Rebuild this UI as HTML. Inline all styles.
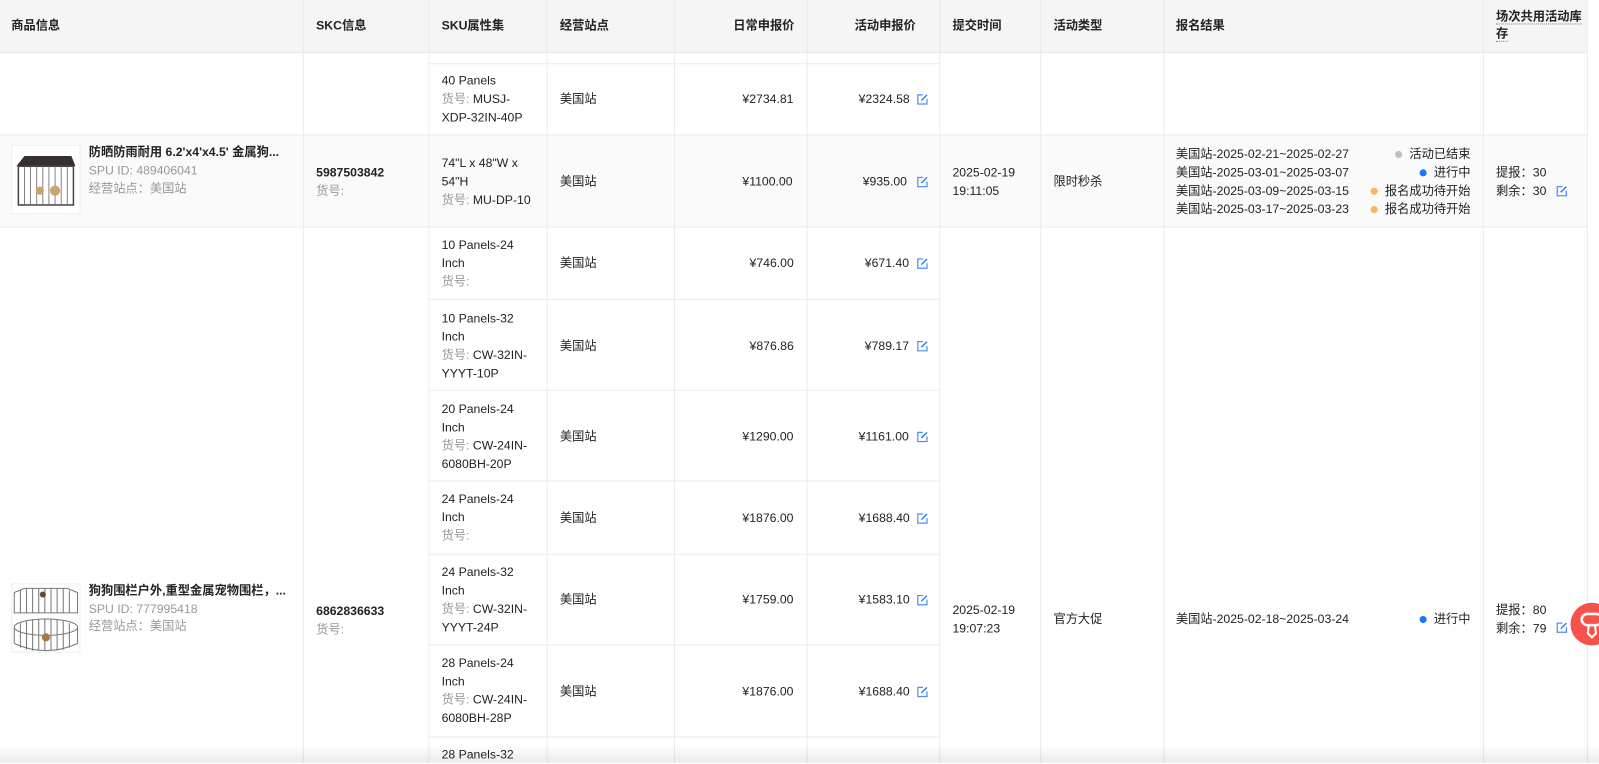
<!DOCTYPE html>
<html><head><meta charset="utf-8">
<style>
*{margin:0;padding:0;box-sizing:border-box}
html,body{width:1599px;height:762px;overflow:hidden;background:#fff}
#w{position:absolute;left:0;top:0;width:1568px;height:748px;transform:scale(1.0198);transform-origin:0 0;font-family:"Liberation Sans","Noto Sans CJK SC",sans-serif;font-size:12px;color:#222;line-height:18px}
.a{position:absolute;white-space:nowrap}
.v{position:absolute;background:#ebebeb;width:1px}
.h{position:absolute;background:#ebebeb;height:1px}
.g{color:#999}
.b{font-weight:bold}
.e{position:absolute;width:11px;height:11px}
.d{display:inline-block;width:7px;height:7px;border-radius:50%;margin-right:7px;vertical-align:0}
</style></head><body><div id="w">
<svg width="0" height="0" style="position:absolute"><symbol id="ed" viewBox="0 0 11 11"><path d="M6 1H1V10H10V5" fill="none" stroke="#4a8ff7" stroke-width="1.2"/><path d="M4.5 6.5L10 1" stroke="#1677ff" stroke-width="1.3"/></symbol></svg>
<!-- header -->
<div style="position:absolute;left:0;top:0;width:1556px;height:52px;background:#f5f5f5;border-bottom:1px solid #e8e8e8"></div>
<div style="position:absolute;left:0;top:132px;width:1556px;height:90px;background:#fafafa"></div>
<div class="a b" style="left:11px;top:16px">商品信息</div>
<div class="a b" style="left:310px;top:16px">SKC信息</div>
<div class="a b" style="left:433px;top:16px">SKU属性集</div>
<div class="a b" style="left:549px;top:16px">经营站点</div>
<div class="a b" style="left:719px;top:16px">日常申报价</div>
<div class="a b" style="left:838px;top:16px">活动申报价</div>
<div class="a b" style="left:934px;top:16px">提交时间</div>
<div class="a b" style="left:1033px;top:16px">活动类型</div>
<div class="a b" style="left:1153px;top:16px">报名结果</div>
<div class="a b" style="left:1467px;top:8px;line-height:17px"><span style="border-bottom:1px dotted #888">场次共用活动库</span><br><span style="border-bottom:1px dotted #888">存</span></div>
<!-- vertical lines -->
<div class="v" style="left:297px;top:0;height:748px"></div>
<div class="v" style="left:420px;top:0;height:748px"></div>
<div class="v" style="left:536px;top:0;height:748px"></div>
<div class="v" style="left:661px;top:0;height:748px"></div>
<div class="v" style="left:791px;top:0;height:748px"></div>
<div class="v" style="left:921px;top:0;height:748px"></div>
<div class="v" style="left:1020px;top:0;height:748px"></div>
<div class="v" style="left:1141px;top:0;height:748px"></div>
<div class="v" style="left:1454px;top:0;height:748px"></div>
<div class="v" style="left:1556px;top:0;height:748px"></div>
<!-- horizontal -->
<div class="h" style="left:0;top:132px;width:1556px"></div>
<div class="h" style="left:0;top:222px;width:1556px"></div>
<div class="h" style="left:420px;top:62px;width:501px"></div>
<div class="h" style="left:420px;top:293px;width:501px"></div>
<div class="h" style="left:420px;top:382px;width:501px"></div>
<div class="h" style="left:420px;top:471px;width:501px"></div>
<div class="h" style="left:420px;top:543px;width:501px"></div>
<div class="h" style="left:420px;top:632px;width:501px"></div>
<div class="h" style="left:420px;top:722px;width:501px"></div>
<!-- row A -->
<div class="a" style="left:433px;top:70px">40 Panels<br><span class="g">货号: </span>MUSJ-<br>XDP-32IN-40P</div>
<div class="a" style="left:549px;top:88px">美国站</div>
<div class="a" style="left:728px;top:88px">¥2734.81</div>
<div class="a" style="left:842px;top:88px">¥2324.58</div><svg class="e" style="left:899px;top:92px"><use href="#ed"/></svg>
<!-- row B -->
<div style="position:absolute;left:11px;top:142px;width:68px;height:68px;border:1px solid #eee;background:#fff">
<svg width="66" height="66" viewBox="0 0 66 66"><path d="M4 20 L12 10 L58 10 L62 20 Z" fill="#3a2f2f"/><rect x="6" y="20" width="54" height="38" fill="none" stroke="#444" stroke-width="1.5"/><g stroke="#666" stroke-width=".8"><path d="M12 20V58M18 20V58M24 20V58M30 20V58M36 20V58M42 20V58M48 20V58M54 20V58"/></g><circle cx="27" cy="44" r="4" fill="#c9a36b"/><circle cx="42" cy="44" r="5" fill="#c9a36b"/></svg></div>
<div class="a b" style="left:87px;top:140px">防晒防雨耐用 6.2'x4'x4.5' 金属狗...</div>
<div class="a g" style="left:87px;top:158px">SPU ID: 489406041</div>
<div class="a g" style="left:87px;top:176px">经营站点：美国站</div>
<div class="a b" style="left:310px;top:160px">5987503842</div>
<div class="a g" style="left:310px;top:178px">货号:</div>
<div class="a" style="left:433px;top:151px">74"L x 48"W x<br>54"H<br><span class="g">货号: </span>MU-DP-10</div>
<div class="a" style="left:549px;top:169px">美国站</div>
<div class="a" style="left:728px;top:169px">¥1100.00</div>
<div class="a" style="left:846px;top:169px">¥935.00</div><svg class="e" style="left:899px;top:173px"><use href="#ed"/></svg>
<div class="a" style="left:934px;top:160px">2025-02-19<br>19:11:05</div>
<div class="a" style="left:1033px;top:169px">限时秒杀</div>
<div class="a" style="left:1153px;top:142px">美国站-2025-02-21~2025-02-27<br>美国站-2025-03-01~2025-03-07<br>美国站-2025-03-09~2025-03-15<br>美国站-2025-03-17~2025-03-23</div>
<div class="a" style="left:1300px;width:142px;top:142px;text-align:right"><span class="d" style="background:#bfbfbf"></span>活动已结束<br><span class="d" style="background:#1677ff"></span>进行中<br><span class="d" style="background:#ffb35c"></span>报名成功待开始<br><span class="d" style="background:#ffb35c"></span>报名成功待开始</div>
<div class="a" style="left:1467px;top:160px">提报：30<br>剩余：30</div><svg class="e" style="left:1526px;top:182px"><use href="#ed"/></svg>
<!-- row C -->
<div style="position:absolute;left:11px;top:572px;width:68px;height:68px;border:1px solid #eee;background:#fff">
<svg width="66" height="66" viewBox="0 0 66 66"><g fill="none" stroke="#777" stroke-width="1"><path d="M2 8 L12 4 L54 4 L64 8 L64 28 L2 28 Z"/><path d="M8 6V28M14 4V28M20 4V28M26 4V28M32 4V28M38 4V28M44 4V28M50 4V28M56 6V28"/><ellipse cx="33" cy="42" rx="31" ry="8"/><path d="M2 42V58M64 42V58M8 38V62M14 36V64M20 35V65M26 34V65M32 34V65M38 34V65M44 35V65M50 36V64M56 38V62"/><path d="M2 58 Q33 72 64 58"/></g><circle cx="30" cy="10" r="3" fill="#6b4a2b"/><circle cx="33" cy="52" r="4" fill="#a87a45"/></svg></div>
<div class="a b" style="left:87px;top:570px">狗狗围栏户外,重型金属宠物围栏，...</div>
<div class="a g" style="left:87px;top:588px">SPU ID: 777995418</div>
<div class="a g" style="left:87px;top:605px">经营站点：美国站</div>
<div class="a b" style="left:310px;top:590px">6862836633</div>
<div class="a g" style="left:310px;top:608px">货号:</div>
<div class="a" style="left:934px;top:589px">2025-02-19<br>19:07:23</div>
<div class="a" style="left:1033px;top:598px">官方大促</div>
<div class="a" style="left:1153px;top:598px">美国站-2025-02-18~2025-03-24</div>
<div class="a" style="left:1300px;width:142px;top:598px;text-align:right"><span class="d" style="background:#1677ff"></span>进行中</div>
<div class="a" style="left:1467px;top:589px">提报：80<br>剩余：79</div><svg class="e" style="left:1526px;top:610px"><use href="#ed"/></svg>
<!-- SKU subrows -->
<div class="a" style="left:433px;top:231px">10 Panels-24<br>Inch<br><span class="g">货号:</span></div>
<div class="a" style="left:549px;top:249px">美国站</div><div class="a" style="left:735px;top:249px">¥746.00</div><div class="a" style="left:848px;top:249px">¥671.40</div><svg class="e" style="left:899px;top:253px"><use href="#ed"/></svg>

<div class="a" style="left:433px;top:303px">10 Panels-32<br>Inch<br><span class="g">货号: </span>CW-32IN-<br>YYYT-10P</div>
<div class="a" style="left:549px;top:330px">美国站</div><div class="a" style="left:735px;top:330px">¥876.86</div><div class="a" style="left:848px;top:330px">¥789.17</div><svg class="e" style="left:899px;top:334px"><use href="#ed"/></svg>

<div class="a" style="left:433px;top:392px">20 Panels-24<br>Inch<br><span class="g">货号: </span>CW-24IN-<br>6080BH-20P</div>
<div class="a" style="left:549px;top:419px">美国站</div><div class="a" style="left:728px;top:419px">¥1290.00</div><div class="a" style="left:842px;top:419px">¥1161.00</div><svg class="e" style="left:899px;top:423px"><use href="#ed"/></svg>

<div class="a" style="left:433px;top:480px">24 Panels-24<br>Inch<br><span class="g">货号:</span></div>
<div class="a" style="left:549px;top:499px">美国站</div><div class="a" style="left:728px;top:499px">¥1876.00</div><div class="a" style="left:842px;top:499px">¥1688.40</div><svg class="e" style="left:899px;top:503px"><use href="#ed"/></svg>

<div class="a" style="left:433px;top:552px">24 Panels-32<br>Inch<br><span class="g">货号: </span>CW-32IN-<br>YYYT-24P</div>
<div class="a" style="left:549px;top:579px">美国站</div><div class="a" style="left:728px;top:579px">¥1759.00</div><div class="a" style="left:842px;top:579px">¥1583.10</div><svg class="e" style="left:899px;top:583px"><use href="#ed"/></svg>

<div class="a" style="left:433px;top:641px">28 Panels-24<br>Inch<br><span class="g">货号: </span>CW-24IN-<br>6080BH-28P</div>
<div class="a" style="left:549px;top:669px">美国站</div><div class="a" style="left:728px;top:669px">¥1876.00</div><div class="a" style="left:842px;top:669px">¥1688.40</div><svg class="e" style="left:899px;top:673px"><use href="#ed"/></svg>

<div class="a" style="left:433px;top:731px">28 Panels-32</div>
<!-- bottom shadow -->
<div style="position:absolute;left:0;top:731px;width:1568px;height:17px;background:linear-gradient(rgba(0,0,0,0),rgba(0,0,0,.08))"></div>
<!-- floating button -->
<div style="position:absolute;left:1540px;top:591px;width:42px;height:42px;border-radius:50%;background:#f5524c">
<svg width="42" height="42" viewBox="0 0 42 42"><rect x="11" y="11" width="20" height="11" rx="5.5" fill="none" stroke="#fff" stroke-width="2.5"/><path d="M18 22 L17 30 L21 34 L25 30 L24 22" fill="none" stroke="#fff" stroke-width="2"/></svg></div>
</div></body></html>
